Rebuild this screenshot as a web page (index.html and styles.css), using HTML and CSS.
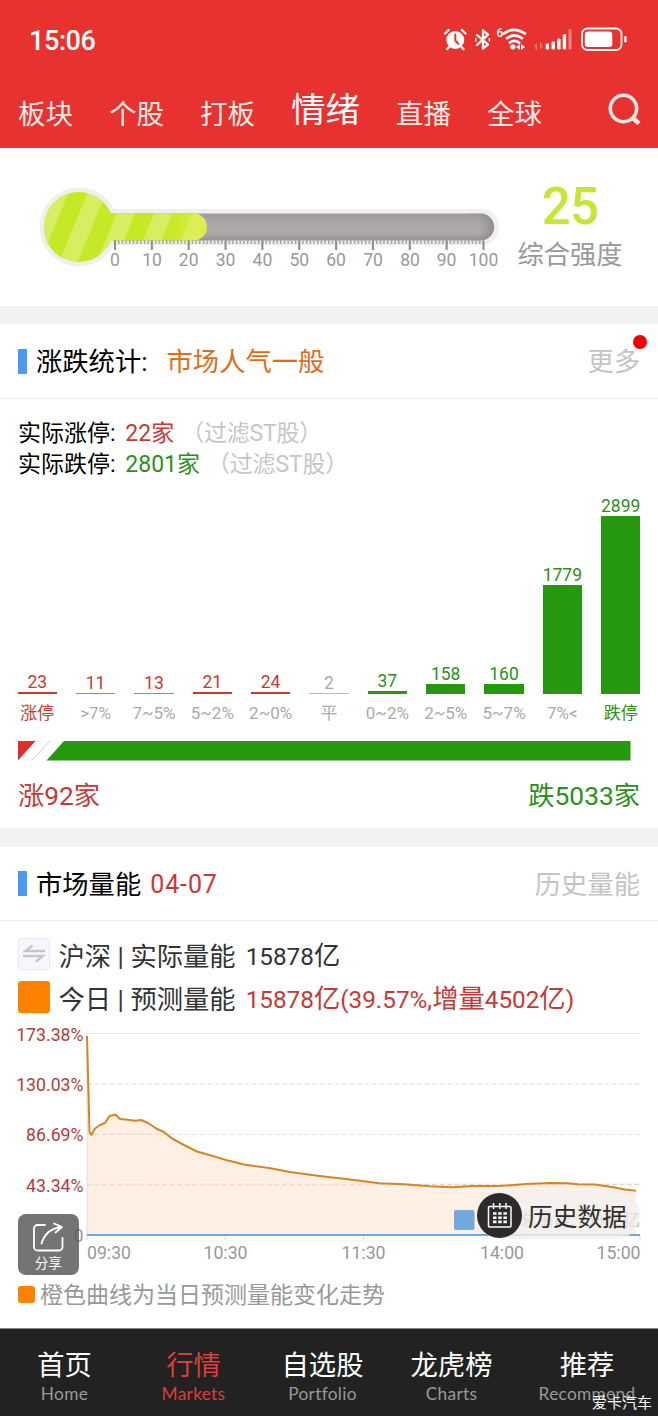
FILE: index.html
```html
<!DOCTYPE html>
<html lang="zh-CN">
<head>
<meta charset="utf-8">
<title>情绪</title>
<link rel="stylesheet" href="styles.css">
</head>
<body>
<div class="screen">
  <header class="top">
    <div class="status">
      <span class="clock">15:06</span>
      <svg class="status-icons" width="188" height="30" viewBox="440 25 188 30" fill="#fff">
        <circle cx="455.300" cy="40" r="9"/>
        <g fill="none" stroke="#fff" stroke-width="2.200" stroke-linecap="round">
          <path d="M445 33.500l3.800-3.600M465.600 33.500l-3.800-3.600M449 47l-2 2.200M461.600 47l2 2.200"/>
          <path d="M455.300 34.500v6l3 3.200" stroke="#e73230" stroke-width="2"/>
          <path d="M477 35l11 9.500-5 4.200V30.500l5 4.200L477 45" stroke-width="2.300" stroke-linejoin="round"/>
          <path d="M475.800 38.400v2.600M489.400 38.400v2.600" stroke-width="1.500"/>
          <path d="M504 33.600q9.500-7.600 21 0M507 38.300q7.500-6 15 0M509.800 42.600q4.500-3.600 9.400 0" stroke-width="2.600"/>
        </g>
        <circle cx="512.800" cy="46.800" r="2.600"/>
        <path d="M516 47l4-3v6zM525 47l-4-3v6z"/>
        <text class="wifi-gen" x="496.500" y="37">6</text>
        <g opacity=".4"><path d="M534 46l3-3v6.500h-1.500V46zM543 46l-3 3v-6.500h1.500V46z"/><rect x="568.500" y="29" width="3" height="20.500" rx="1"/></g>
        <rect x="545.700" y="43.500" width="3.400" height="6" rx="1.300"/>
        <rect x="551.500" y="41.500" width="3.400" height="8" rx="1.300"/>
        <rect x="557.200" y="38.500" width="3.400" height="11" rx="1.300"/>
        <rect x="562.700" y="34.200" width="3.400" height="15.300" rx="1.300"/>
        <rect x="582" y="28.500" width="39.500" height="21.500" rx="5.500" fill="none" stroke="#fff" stroke-width="1.800"/>
        <rect x="584.800" y="31.500" width="27.500" height="15.500" rx="3"/>
        <rect x="624.200" y="36" width="2.400" height="6.500" rx="1.200"/>
      </svg>
    </div>
    <nav class="tabs">
      <span>板块</span><span>个股</span><span>打板</span><span class="active">情绪</span><span>直播</span><span>全球</span>
      <svg class="search" width="34" height="34" viewBox="0 0 34 34" fill="none" stroke="#ffe9e6" stroke-width="3.500"><circle cx="15.500" cy="15.500" r="13.200"/><path d="M24.500 24.500l6.500 6.200" stroke-width="4.500"/></svg>
    </nav>
  </header>

  <section class="gauge">
    <svg class="thermo" width="480" height="100" viewBox="30 178 480 100">
      <defs>
        <linearGradient id="tube" x1="0" y1="0" x2="0" y2="1"><stop offset="0" stop-color="#9f9b9b"/><stop offset=".25" stop-color="#a9a5a5"/><stop offset=".7" stop-color="#aeaaa9"/><stop offset="1" stop-color="#989292"/></linearGradient>
        <radialGradient id="tip" gradientUnits="userSpaceOnUse" cx="470" cy="227" r="26"><stop offset="0" stop-color="#8f8989" stop-opacity="0"/><stop offset=".4" stop-color="#8f8989" stop-opacity="0"/><stop offset="1" stop-color="#8f8989"/></radialGradient>
        <linearGradient id="glow" gradientUnits="userSpaceOnUse" x1="166" y1="0" x2="207" y2="0"><stop offset="0" stop-color="#e0ee4c" stop-opacity="0"/><stop offset="1" stop-color="#e0ee4c" stop-opacity=".8"/></linearGradient>
        <pattern id="stripes" width="37.500" height="10" patternUnits="userSpaceOnUse" patternTransform="translate(73.500 227) skewX(-22.500)"><rect width="37.500" height="10" fill="#c6e926"/><rect width="18.500" height="10" fill="#d6ee5f"/></pattern>
        <pattern id="minor" x="114.300" y="240" width="3.685" height="6" patternUnits="userSpaceOnUse"><rect width="1.400" height="6" fill="#a19a98"/></pattern>
        <clipPath id="fluid"><path d="M111 213.500A35 35 0 1 0 111 240.500H193.500a13.500 13.500 0 0 0 0-27z"/></clipPath>
      </defs>
      <g fill="#efefef"><circle cx="79" cy="227" r="39.500"/><rect x="90" y="209" width="409" height="36.500" rx="18"/></g>
      <rect x="100" y="213.500" width="394" height="27" rx="13.500" fill="url(#tube)"/>
      <path d="M470 213.500h10.500a13.500 13.500 0 0 1 0 27H470z" fill="url(#tip)"/>
      <g clip-path="url(#fluid)"><rect x="40" y="187" width="170" height="80" fill="url(#stripes)"/><rect x="166" y="210" width="42" height="34" fill="url(#glow)"/></g>
      <rect x="114.300" y="240.500" width="370" height="3.500" fill="url(#minor)"/>
      <path d="M115 240.500v9.500M151.850 240.500v9.500M188.700 240.500v9.500M225.550 240.500v9.500M262.400 240.500v9.500M299.250 240.500v9.500M336.100 240.500v9.500M372.950 240.500v9.500M409.800 240.500v9.500M446.650 240.500v9.500M483.500 240.500v9.500" stroke="#928988" stroke-width="2"/>
      <g class="scale">
        <text x="115" y="266">0</text><text x="152" y="266">10</text><text x="188.700" y="266">20</text><text x="225.500" y="266">30</text><text x="262.400" y="266">40</text><text x="299.300" y="266">50</text><text x="336" y="266">60</text><text x="373" y="266">70</text><text x="410" y="266">80</text><text x="446.500" y="266">90</text><text x="483.500" y="266">100</text>
      </g>
    </svg>
    <div class="score"><strong>25</strong><span>综合强度</span></div>
  </section>

  <section class="stats">
    <div class="heading"><i class="mark"></i><h2>涨跌统计:</h2><span class="mood">市场人气一般</span><span class="more">更多<i class="dot"></i></span></div>
    <div class="limits">
      <p>实际涨停: <span class="up"><b>22</b>家</span><span class="note">（过滤<b>ST</b>股）</span></p>
      <p>实际跌停: <span class="down"><b>2801</b>家</span><span class="note">（过滤<b>ST</b>股）</span></p>
    </div>
    <div class="bars">
      <div class="col up"><b>23</b><i style="height:2px"></i></div>
      <div class="col up thin"><b>11</b><i style="height:1px"></i></div>
      <div class="col up thin"><b>13</b><i style="height:1px"></i></div>
      <div class="col up"><b>21</b><i style="height:1.500px"></i></div>
      <div class="col up"><b>24</b><i style="height:2px"></i></div>
      <div class="col flat"><b>2</b><i style="height:1px"></i></div>
      <div class="col down"><b>37</b><i style="height:2.500px"></i></div>
      <div class="col down"><b>158</b><i style="height:10px"></i></div>
      <div class="col down"><b>160</b><i style="height:10px"></i></div>
      <div class="col down"><b>1779</b><i style="height:109px"></i></div>
      <div class="col down"><b>2899</b><i style="height:177.500px"></i></div>
    </div>
    <div class="ranges"><span class="up">涨停</span><span>&gt;7%</span><span>7~5%</span><span>5~2%</span><span>2~0%</span><span>平</span><span>0~2%</span><span>2~5%</span><span>5~7%</span><span>7%&lt;</span><span class="down">跌停</span></div>
    <svg class="ratio" width="613" height="20" viewBox="0 0 613 20"><path d="M0 0h17.500L0 19.500z" fill="#dc3030"/><path d="M14 19.500L32 0" stroke="#aaa" stroke-width=".6"/><path d="M46 0h566.500v19.500H28.500z" fill="#25980f"/></svg>
    <div class="totals"><span class="up">涨<b>92</b>家</span><span class="down">跌<b>5033</b>家</span></div>
  </section>

  <section class="volume">
    <div class="heading"><i class="mark"></i><h2>市场量能</h2><span class="date">04-07</span><span class="more">历史量能</span></div>
    <div class="rows">
      <div class="row"><svg width="32" height="32" viewBox="0 0 32 32" fill="none"><rect x=".5" y=".5" width="31" height="31" rx="2.500" fill="#f6f6fc" stroke="#e8e8ee"/><path d="M27 13H7.500l7-5.500M5 18h20L18 23.500" stroke="#c6c6cb" stroke-width="2.300"/></svg><span>沪深<b class="bar">|</b>实际量能</span><span class="amount"><b>15878</b>亿</span></div>
      <div class="row"><i class="swatch"></i><span>今日<b class="bar">|</b>预测量能</span><span class="amount up"><b>15878</b>亿<b>(39.57%,</b>增量<b>4502</b>亿<b>)</b></span></div>
    </div>
    <div class="chart">
      <svg width="658" height="244" viewBox="0 1022 658 244">
        <path d="M87 1033.500H640" stroke="#e8e8e8" stroke-width="1.200"/>
        <path d="M87 1084H640M87 1134.300H640M87 1184.500H640" stroke="#e9e9e9" stroke-width="1.300" stroke-dasharray="5 2.500"/>
        <path class="area" d="M87 1036L89.500 1132L91.500 1135L95 1128.500L100 1125L105 1123L109.500 1116L115.500 1114.500L120 1119L126 1119.500L135 1120.700L141 1120L148 1123L157 1129L164 1132L172 1138.500L184 1145L197 1151.500L211 1155.500L226 1160L244 1164.500L269 1168L290 1172L310 1174.800L328 1177L346 1179L362 1181L379 1183.300L404 1184.300L430 1186.300L452 1187.200L472 1186L500 1186L526 1184L550 1183L568 1183.300L578 1184.300L595 1184.500L612 1187L625 1189.500L636 1190.800V1235H87z"/>
        <path d="M87 1134.300H175M87 1184.500H640" stroke="#d8c8bd" stroke-width="1.300" stroke-dasharray="5 2.500" opacity=".5"/>
        <path d="M87 1033V1240M225.400 1235v5M363.500 1235v5M502 1235v5M640 1235v5" stroke="#dcdde2" stroke-width="1"/>
        <path class="curve" d="M87 1036L89.500 1132L91.500 1135L95 1128.500L100 1125L105 1123L109.500 1116L115.500 1114.500L120 1119L126 1119.500L135 1120.700L141 1120L148 1123L157 1129L164 1132L172 1138.500L184 1145L197 1151.500L211 1155.500L226 1160L244 1164.500L269 1168L290 1172L310 1174.800L328 1177L346 1179L362 1181L379 1183.300L404 1184.300L430 1186.300L452 1187.200L472 1186L500 1186L526 1184L550 1183L568 1183.300L578 1184.300L595 1184.500L612 1187L625 1189.500L636 1190.800"/>
        <path d="M87 1235H640" stroke="#71a9df" stroke-width="2"/>
        <rect x="454" y="1210" width="20.500" height="20" rx="2" fill="#71a9df"/>
        <text class="under" x="640" y="1226">总量能:15878亿</text>
        <g class="ylab"><text x="83.500" y="1041">173.38%</text><text x="83.500" y="1090.500">130.03%</text><text x="83.500" y="1141">86.69%</text><text x="83.500" y="1191.500">43.34%</text><text x="83.500" y="1242" fill="#999">0</text></g>
        <g class="xlab"><text x="109" y="1259">09:30</text><text x="225.500" y="1259">10:30</text><text x="363.500" y="1259">11:30</text><text x="502" y="1259">14:00</text><text x="618.500" y="1259">15:00</text></g>
      </svg>
      <div class="share"><svg width="32" height="32" viewBox="0 0 32 32" fill="none" stroke="#fff" stroke-width="1.800" stroke-linecap="round" stroke-linejoin="round"><path d="M13 4H5.500A3.500 3.500 0 0 0 2 7.500V26a3.500 3.500 0 0 0 3.500 3.500H27a3.500 3.500 0 0 0 3.500-3.500V17"/><path d="M9.500 22.500C12 14 18 7.500 29 6M22 2.500L30 6l-6.500 5.500"/></svg><span>分享</span></div>
      <div class="history"><span class="disc"><svg width="26" height="26" viewBox="0 0 26 26" fill="none" stroke="#fff"><rect x="1.500" y="4.500" width="22.500" height="20.500" rx="1" stroke-width="1.500"/><path d="M6.500 1v6M12.800 1v6M19 1v6" stroke-width="1.500"/><path d="M6 11.500h14M6 15.700h14M6 19.900h14" stroke-width="2.600" stroke-dasharray="3.500 1.700"/></svg></span><span>历史数据</span></div>
    </div>
    <div class="legend"><i></i>橙色曲线为当日预测量能变化走势</div>
  </section>

  <footer class="nav">
    <div><span>首页</span><small>Home</small></div>
    <div class="on"><span>行情</span><small>Markets</small></div>
    <div><span>自选股</span><small>Portfolio</small></div>
    <div><span>龙虎榜</span><small>Charts</small></div>
    <div><span>推荐</span><small>Recommend</small></div>
    <em class="credit">爱卡汽车</em>
  </footer>
</div>
</body>
</html>
```

FILE: styles.css
```css
* { box-sizing: border-box; }
body { margin: 0; background: #fff; font-family: Roboto, "Noto Sans CJK SC", sans-serif; color: #000; }
b, strong, h2, i, em { font-weight: 400; font-style: normal; }
h2, p { margin: 0; }
svg { display: block; }
.screen { width: 658px; height: 1416px; display: flex; flex-direction: column; overflow: hidden; }
.up { color: #c43a36; }
.down { color: #2c9019; }
.flat { color: #aaa; }

.top { height: 148px; background: #e73230; color: #fff; padding: 25px 30px 0 18px; }
.status { height: 30px; display: flex; justify-content: space-between; align-items: center; padding-left: 11px; }
.clock { font-size: 27px; line-height: 30px; font-weight: 500; letter-spacing: -.4px; padding-top: 1px; }
.wifi-gen { font: 500 12px Roboto, sans-serif; }
.tabs { height: 70px; margin: 20px -14px 0 0; padding-top: 9px; display: flex; align-items: center; font-size: 27.500px; line-height: 50px; color: #ffe9e6; }
.tabs span { margin-right: 36px; }
.tabs .active { font-size: 34.500px; color: #fff; margin-top: -9px; }
.search { margin: -10px 0 0 auto; }

.gauge { height: 158px; display: flex; padding: 30px 0 0 30px; }
.scale { font: 17.500px Roboto, sans-serif; fill: #999; text-anchor: middle; }
.score { width: 120px; display: flex; flex-direction: column; align-items: center; }
.score strong { font-size: 51px; line-height: 58px; color: #c6e635; font-weight: 500; letter-spacing: -.8px; }
.score span { font-size: 26.300px; line-height: 36px; color: #999; padding-top: 1px; }

.stats { height: 522px; border-top: 18px solid #f2f2f2; }
.heading { height: 75px; padding: 0 18px 0 17.500px; border-bottom: 1.500px solid #eee; display: flex; align-items: center; font-size: 26.300px; line-height: 36px; }
.heading h2 { font-size: inherit; }
.heading h2, .heading span { padding-top: 2px; }
.mark { width: 9px; height: 25px; background: #4b9bf5; margin-right: 9.500px; }
.mood { color: #df6c16; margin-left: 19px; }
.more { margin-left: auto; color: #c4c4c4; position: relative; }
.dot { position: absolute; right: -7px; top: -7px; width: 14px; height: 14px; border-radius: 50%; background: #f00000; }
.limits { padding: 18.500px 18px 0; font-size: 23px; line-height: 31.500px; }
.limits span { margin-left: 4px; }
.limits .note { color: #c6c6c6; margin-left: 7px; letter-spacing: -.2px; }
.bars { height: 213px; padding: 0 17.500px; display: flex; justify-content: space-between; align-items: flex-end; }
.col { width: 39.500px; display: flex; flex-direction: column; align-items: center; font-size: 17.500px; line-height: 20px; }
.col i { width: 100%; background: #c43a36; }
.col.thin i { background: #cd7573; }
.col.down i { background: #25980f; }
.col.flat i { background: #bbb; }
.ranges { height: 47px; padding: 0 8.100px; display: grid; grid-template-columns: repeat(11, 1fr); text-align: center; font-size: 17px; line-height: 39px; }
.ranges span { color: #aaa; white-space: nowrap; }
.ranges .up { color: #c43a36; }
.ranges .down { color: #2c9019; }
.ratio { margin-left: 17.500px; }
.totals { padding: 16px 18px 0; display: flex; justify-content: space-between; font-size: 26.300px; line-height: 38px; }
.totals b { font-size: 26.300px; }

.volume { height: 500px; border-top: 19px solid #f2f2f2; }
.volume .heading { height: 74px; }
.date { color: #c43a36; font-size: 25px; letter-spacing: .9px; margin-left: 9px; }
.rows { padding: 13px 17.500px 0; display: flex; flex-direction: column; gap: 3px; }
.row { height: 40px; display: flex; align-items: center; font-size: 26.300px; color: #333; white-space: nowrap; }
.row > :first-child { margin-right: 9px; }
.row b { font-size: 24.300px; }
.row .bar { font-size: 26px; margin: 0 6.500px; }
.amount { margin: -2px 0 0 10px; }
.amount.up { color: #c43a36; }
.swatch { width: 32px; height: 32px; border-radius: 3px; background: #ff8100; }
.chart { position: relative; height: 244px; margin-top: 5px; }
.area { fill: #fff0e5; }
.curve { fill: none; stroke: #d68524; stroke-width: 2; stroke-linejoin: round; }
.ylab { font: 17.700px Roboto, sans-serif; fill: #b83a3a; text-anchor: end; }
.xlab { font: 17.700px Roboto, sans-serif; fill: #999; text-anchor: middle; }
.under { font-size: 17px; fill: #999; text-anchor: end; }
.share { position: absolute; left: 17.500px; top: 191.500px; width: 61.500px; height: 61.500px; border-radius: 8px; background: rgba(92, 92, 92, .85); color: #fff; display: flex; flex-direction: column; align-items: center; padding-top: 7px; font-size: 13.500px; line-height: 20px; }
.history { position: absolute; left: 477px; top: 169px; width: 163px; height: 48px; border-radius: 24px; background: rgba(240, 240, 240, .8); display: flex; align-items: center; font-size: 24.700px; color: #2d2d2d; white-space: nowrap; }
.disc { width: 45px; height: 45px; border-radius: 50%; background: #2c2a2b; display: grid; place-items: center; margin-right: 6px; flex: none; }
.legend { display: flex; align-items: center; padding: 13px 17.500px 0; font-size: 23px; line-height: 34px; color: #999; }
.legend i { width: 17.500px; height: 17.500px; border-radius: 3px; background: #ff8100; margin: -3px 5px 0 0; }

.nav { height: 88px; background: #222; border-top: 1px solid #888; display: grid; grid-template-columns: repeat(4, 129px) 142px; position: relative; color: #fff; text-align: center; padding-top: 20px; }
.nav div { display: flex; flex-direction: column; }
.nav span { font-size: 27.300px; line-height: 35px; }
.nav small { font: 17.300px/20px Lato, sans-serif; color: #999; letter-spacing: .3px; }
.nav .on, .nav .on small { color: #d8403a; }
.credit { position: absolute; right: 6px; bottom: 3px; font-size: 15px; line-height: 20px; }
```
